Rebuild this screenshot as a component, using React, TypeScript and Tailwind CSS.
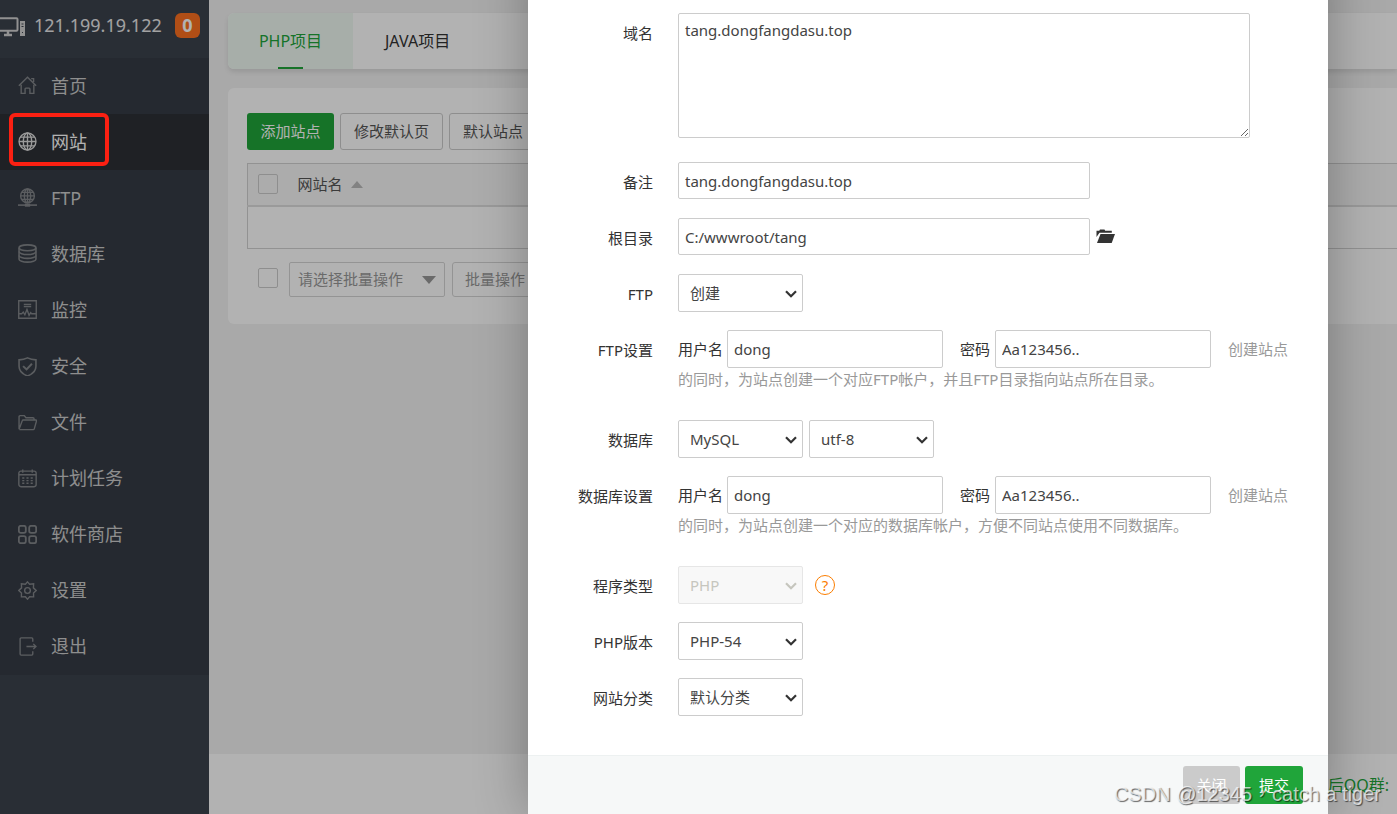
import { useState } from 'react';
import type { ReactNode } from 'react';

interface MenuItem {
  id: string;
  label: string;
  icon: ReactNode;
}

const menu: MenuItem[] = [
  {
    id: 'home',
    label: '首页',
    icon: <path d="M.8 9.200 9 1.200l8.200 8M3 8.200V16.500h3.700v-4.200a.8.8 0 0 1 .8-.8h3a.8.8 0 0 1 .8.8v4.200H15V8.200M12.500 2.500h2.300v3.200" />,
  },
  {
    id: 'site',
    label: '网站',
    icon: (
      <>
        <circle cx="9" cy="9" r="8" />
        <ellipse cx="9" cy="9" rx="4" ry="8" />
        <path d="M9 1v16M1 9h16M2.500 4.800h13M2.500 13.200h13" />
      </>
    ),
  },
  {
    id: 'ftp',
    label: 'FTP',
    icon: (
      <>
        <circle cx="9" cy="7.500" r="6.500" />
        <ellipse cx="9" cy="7.500" rx="3" ry="6.500" />
        <path d="M9 1v13M2.500 7.500h13M3.500 4.200h11M3.500 10.800h11" />
        <path d="M0 16.200h18" strokeWidth="1.500" />
        <path d="M6.500 16.200h5" strokeWidth="3" />
      </>
    ),
  },
  {
    id: 'database',
    label: '数据库',
    icon: (
      <g strokeWidth="1.500">
        <ellipse cx="9" cy="3.600" rx="8" ry="2.800" />
        <path d="M1 3.600v10.800c0 1.500 3.600 2.800 8 2.800s8-1.300 8-2.800V3.600" />
        <path d="M1 7.200C1 8.700 4.600 10 9 10s8-1.300 8-2.800M1 10.800c0 1.500 3.600 2.800 8 2.800s8-1.300 8-2.800" />
      </g>
    ),
  },
  {
    id: 'monitor',
    label: '监控',
    icon: (
      <>
        <path d="M.7.7h16.600v16.600H.7zM5.500 4.200h7M5.500 6.200h7" />
        <path d="M1 13h2.500L5 11.500 6.500 14 8.500 9l2 5.500L12 12l1 1h4" />
      </>
    ),
  },
  {
    id: 'security',
    label: '安全',
    icon: (
      <>
        <path d="M9 .8c2.500 1.300 5 1.800 8 1.900v6.100c0 4.300-3.200 7.400-8 9.100-4.800-1.700-8-4.800-8-9.100V2.700c3-.1 5.500-.6 8-1.900z" strokeWidth="1.500" />
        <path d="m4.800 8.600 3.300 3.200 5.100-5.400" strokeWidth="1.800" />
      </>
    ),
  },
  {
    id: 'files',
    label: '文件',
    icon: <path d="M1 15.500V3.500a1 1 0 0 1 1-1h4l1.500 2h6.700a1 1 0 0 1 1 1v1M1 15.500 4 7.300a1 1 0 0 1 1-.7h12a.6.6 0 0 1 .6.800l-2.200 7.600a1 1 0 0 1-1 .7H1.300" />,
  },
  {
    id: 'cron',
    label: '计划任务',
    icon: (
      <>
        <rect x=".8" y="2" width="16.400" height="14.800" rx="2" />
        <path d="M.8 5.500h16.400M4.500.5v3M13.500.5v3" />
        <path d="M4 8.500h10M4 11h10M4 13.500h10" strokeDasharray="2 2" />
      </>
    ),
  },
  {
    id: 'store',
    label: '软件商店',
    icon: (
      <g strokeWidth="1.700">
        <rect x=".8" y=".8" width="6.600" height="6.600" rx="1.800" />
        <rect x="10.600" y=".8" width="6.600" height="6.600" rx="1.800" />
        <rect x=".8" y="10.600" width="6.600" height="6.600" rx="1.800" />
        <rect x="10.600" y="10.600" width="6.600" height="6.600" rx="1.800" />
      </g>
    ),
  },
  {
    id: 'config',
    label: '设置',
    icon: (
      <>
        <path d="M9 .8 11 3l3.800-.3-.2 3.800L17.200 9l-2.500 2.300.1 3.700-3.800-.1L9 17.200l-2-2.300-3.800.1.100-3.700L.8 9l2.600-2.500-.2-3.800L7 3z" />
        <circle cx="9" cy="9" r="2.700" />
      </>
    ),
  },
  {
    id: 'logout',
    label: '退出',
    icon: <path d="M14 4.500V1.800a1 1 0 0 0-1-1H3a1 1 0 0 0-1 1v14.400a1 1 0 0 0 1 1h10a1 1 0 0 0 1-1v-2.700M8 9h9M14.500 6.500 17 9l-2.500 2.500" />,
  },
];

const inputCls = 'rounded-xs border border-[#ccc] bg-white px-1.5 text-[#444] outline-none focus:border-[#20a53a]';
const plainButton = 'h-[37px] shrink-0 rounded-[3px] border border-[#ccc] px-[13px] pb-0.5 text-[#555]';

function Sidebar({ active, onSelect }: { active: string; onSelect: (id: string) => void }) {
  return (
    <aside className="w-[209px] shrink-0 bg-[#3c424d]">
      <div className="flex h-[58px] items-center pb-2">
        <svg width="26" height="20" viewBox="0 0 26 20" className="mr-2 mt-1 text-[#d0d0d0]" fill="none" stroke="currentColor" aria-hidden="true">
          <path d="M-1 1.200h17.500a1 1 0 0 1 1 1v10.600a1 1 0 0 1-1 1H-1" strokeWidth="2" />
          <path d="M4 18h8M8 14v4" strokeWidth="2.500" />
          <path d="M20 4h5v15h-5z" fill="currentColor" stroke="none" />
          <path d="M21.500 7h2M21.500 9.500h2M22 15.500h1" stroke="#3c424d" />
        </svg>
        <span className="text-lg text-[#e8e8e8]">121.199.19.122</span>
        <span className="ml-auto mr-[9px] flex size-[25px] items-center justify-center rounded-md bg-[#fd7020] text-lg font-bold text-white">0</span>
      </div>
      <ul className="flex h-[617px] flex-col bg-[#363c46] text-lg">
        {menu.map((item) => {
          const on = item.id === active;
          return (
            <li key={item.id} className="flex-1">
              <a
                href={`#${item.id}`}
                onClick={() => onSelect(item.id)}
                className={`flex h-full items-center gap-[14px] pb-px pl-[18px] ${on ? 'bg-[#2d3035] text-white' : 'text-[#ccc]'}`}
              >
                <svg
                  width="19"
                  height="19"
                  viewBox="0 0 18 18"
                  fill="none"
                  stroke="currentColor"
                  strokeWidth="1.300"
                  aria-hidden="true"
                  className={on ? 'text-[#ddd]' : 'text-[#83868a]'}
                >
                  {item.icon}
                </svg>
                {item.label}
              </a>
            </li>
          );
        })}
      </ul>
    </aside>
  );
}

function SitePage() {
  return (
    <main className="flex min-w-0 flex-1 flex-col bg-[#f2f2f2]">
      <nav className="ml-[19px] mt-[13px] flex h-14 rounded-l-md bg-white text-base shadow-[0_3px_5px_rgba(0,0,0,0.1)]">
        <a href="#php" className="flex w-[125px] flex-col items-center rounded-l-md bg-[#f0faf3] pt-4 text-[#20a53a]">
          PHP项目
          <span className="mt-auto h-0.5 w-[25px] bg-[#20a53a]" />
        </a>
        <a href="#java" className="px-8 pt-4 text-[#333]">JAVA项目</a>
      </nav>

      <section className="ml-[19px] mt-[19px] overflow-hidden rounded-l-md bg-white pb-[27px] pl-[19px] pt-[25px]">
        <div className="flex gap-1.5">
          <button className="h-[37px] w-[87px] shrink-0 rounded-[3px] bg-[#20a53a] pb-0.5 text-white">添加站点</button>
          <button className={plainButton}>修改默认页</button>
          <button className={plainButton}>默认站点</button>
        </div>

        <table className="mt-[13px] w-full border-collapse border border-r-0 border-[#d2d2d2]">
          <thead>
            <tr className="h-[42px] border-b-2 border-[#ddd] bg-[#f6f6f6]">
              <th className="w-[42px] pl-2.5 text-left">
                <input type="checkbox" aria-label="全选" className="block size-5 appearance-none rounded-xs border border-[#ccc]" />
              </th>
              <th className="pl-2 text-left font-normal text-[#555]">
                <span className="flex items-center gap-2">
                  网站名
                  <span className="border-x-6 border-b-7 border-x-transparent border-b-[#bbb]" />
                </span>
              </th>
            </tr>
          </thead>
          <tbody>
            <tr className="h-[43px]">
              <td colSpan={2} />
            </tr>
          </tbody>
        </table>

        <div className="mt-[13px] flex items-center pl-[11px]">
          <input type="checkbox" aria-label="选择全部站点" className="mb-1 size-5 shrink-0 appearance-none rounded-xs border border-[#ccc]" />
          <div className="relative ml-[11px] shrink-0">
            <select aria-label="批量操作类型" className="h-[35px] w-[156px] appearance-none rounded-xs border border-[#d5d5d5] pb-0.5 pl-2 text-[#999] outline-none">
              <option>请选择批量操作</option>
            </select>
            <span className="pointer-events-none absolute right-[9px] top-[14px] border-x-7 border-t-8 border-x-transparent border-t-[#999]" />
          </div>
          <button className="ml-[7px] h-[35px] shrink-0 rounded-[3px] border border-[#d5d5d5] px-3 pb-0.5 text-[#999]">批量操作</button>
        </div>
      </section>

      <footer className="mt-auto flex h-[60px] items-center justify-end bg-white pr-2 pt-0.5">
        <a href="#qq" className="text-base text-[#20a53a]">后QQ群:</a>
      </footer>
    </main>
  );
}

function FormRow({ label, htmlFor, children }: { label: string; htmlFor: string; children: ReactNode }) {
  return (
    <div className="mb-4 flex min-h-10 items-start">
      <label htmlFor={htmlFor} className="mr-[25px] w-[125px] shrink-0 text-right leading-10">{label}</label>
      <div className="min-w-0 flex-1">{children}</div>
    </div>
  );
}

function Select({ id, label, options, disabled }: { id: string; label?: string; options: string[]; disabled?: boolean }) {
  return (
    <div className="relative w-[125px]">
      <select
        id={id}
        aria-label={label}
        disabled={disabled}
        className="h-[38px] w-full appearance-none rounded-xs border border-[#ccc] bg-white pb-px pl-[11px] pr-7 text-[#444] outline-none disabled:border-[#e6e6e6] disabled:bg-[#f8f8f8] disabled:text-[#c6c6be]"
      >
        {options.map((o) => (
          <option key={o}>{o}</option>
        ))}
      </select>
      <svg
        width="12"
        height="8"
        viewBox="0 0 12 8"
        fill="none"
        stroke="currentColor"
        strokeWidth="2.200"
        aria-hidden="true"
        className={`pointer-events-none absolute right-1.5 top-4 ${disabled ? 'text-[#c6c6be]' : 'text-[#333]'}`}
      >
        <path d="m1 1.200 5 5 5-5" />
      </svg>
    </div>
  );
}

// User name + password pair, shared by the FTP and database settings
function Account({ id, hint }: { id: string; hint: string }) {
  return (
    <div className="h-[74px]">
      <div className="flex h-[38px] items-center whitespace-nowrap">
        <label htmlFor={`${id}-user`} className="mr-1">用户名</label>
        <input id={`${id}-user`} defaultValue="dong" className={`${inputCls} mr-[17px] h-[38px] w-[216px]`} />
        <label htmlFor={`${id}-pass`} className="mr-[5px]">密码</label>
        <input id={`${id}-pass`} defaultValue="Aa123456.." className={`${inputCls} mr-[17px] h-[38px] w-[216px]`} />
        <span className="text-[#999]">创建站点</span>
      </div>
      <p className="text-[#999]">{hint}</p>
    </div>
  );
}

function AddSiteDialog() {
  return (
    <div role="dialog" aria-label="添加网站" className="-mt-12 flex w-[800px] flex-col bg-white pt-12 text-[#333] shadow-[1px_1px_50px_rgba(0,0,0,0.3)]">
      <form className="flex-1 overflow-hidden pt-[13px]">
        <FormRow label="域名" htmlFor="domain">
          <textarea
            id="domain"
            defaultValue="tang.dongfangdasu.top"
            className="mb-2 block h-[125px] w-[572px] rounded-xs border border-[#ccc] px-1.5 py-[5px] text-[#444] outline-none"
          />
        </FormRow>
        <FormRow label="备注" htmlFor="note">
          <input id="note" defaultValue="tang.dongfangdasu.top" className={`${inputCls} block h-[37px] w-[412px]`} />
        </FormRow>
        <FormRow label="根目录" htmlFor="path">
          <div className="flex items-center gap-1.5">
            <input id="path" defaultValue="C:/wwwroot/tang" className={`${inputCls} h-[37px] w-[412px]`} />
            <button type="button" aria-label="选择目录">
              <svg width="20" height="15" viewBox="0 0 20 15" fill="currentColor" aria-hidden="true">
                <path d="M.5 8V1.800h2.800L4 .5h4.500l.7 1.300h6.600v2H3.500z" />
                <path d="M4.500 5H19l-3.300 9H1z" />
              </svg>
            </button>
          </div>
        </FormRow>
        <FormRow label="FTP" htmlFor="ftp-type">
          <Select id="ftp-type" options={['创建', '不创建']} />
        </FormRow>
        <FormRow label="FTP设置" htmlFor="ftp-user">
          <Account id="ftp" hint="的同时，为站点创建一个对应FTP帐户，并且FTP目录指向站点所在目录。" />
        </FormRow>
        <FormRow label="数据库" htmlFor="db-type">
          <div className="flex gap-1.5">
            <Select id="db-type" options={['MySQL', 'SQLServer']} />
            <Select id="db-charset" label="字符集" options={['utf-8', 'gbk']} />
          </div>
        </FormRow>
        <FormRow label="数据库设置" htmlFor="db-user">
          <Account id="db" hint="的同时，为站点创建一个对应的数据库帐户，方便不同站点使用不同数据库。" />
        </FormRow>
        <FormRow label="程序类型" htmlFor="program">
          <div className="flex items-center gap-3">
            <Select id="program" options={['PHP']} disabled />
            <a href="#help" className="flex size-5 items-center justify-center rounded-full border border-[#fb7d00] text-[#fb7d00]">?</a>
          </div>
        </FormRow>
        <FormRow label="PHP版本" htmlFor="php-version">
          <Select id="php-version" options={['PHP-54', 'PHP-56', 'PHP-72']} />
        </FormRow>
        <FormRow label="网站分类" htmlFor="category">
          <Select id="category" options={['默认分类']} />
        </FormRow>
      </form>
      <div className="flex h-[59px] shrink-0 justify-end gap-[5px] border-t border-[#edf1f1] bg-[#f6f8f8] pr-[25px] pt-2.5 text-white">
        <button className="h-[38px] w-[57px] rounded-[3px] bg-[#cbcbcb]">关闭</button>
        <button className="h-[38px] w-[58px] rounded-[3px] bg-[#20a53a]">提交</button>
      </div>
    </div>
  );
}

export default function App() {
  const [active, setActive] = useState('site');

  return (
    <div className="relative flex h-screen overflow-hidden font-['Noto_Sans','Noto_Sans_CJK_SC',sans-serif] text-[15px] leading-[22px]">
      <Sidebar active={active} onSelect={setActive} />
      <SitePage />

      {/* Mask and dialog */}
      <div className="absolute inset-0 flex justify-end bg-black/30 pr-[69px]">
        <AddSiteDialog />
      </div>

      <div className="pointer-events-none absolute left-[9px] top-[113px] h-[53px] w-[100px] rounded-md border-4 border-[#fb2012]" />

      <div className="pointer-events-none absolute bottom-1.5 right-4 font-['Liberation_Sans','Noto_Sans_CJK_TC',sans-serif] text-xl text-white/70 [text-shadow:1px_1px_1px_rgba(0,0,0,0.6)]">
        CSDN @12345，catch a tiger
      </div>
    </div>
  );
}
